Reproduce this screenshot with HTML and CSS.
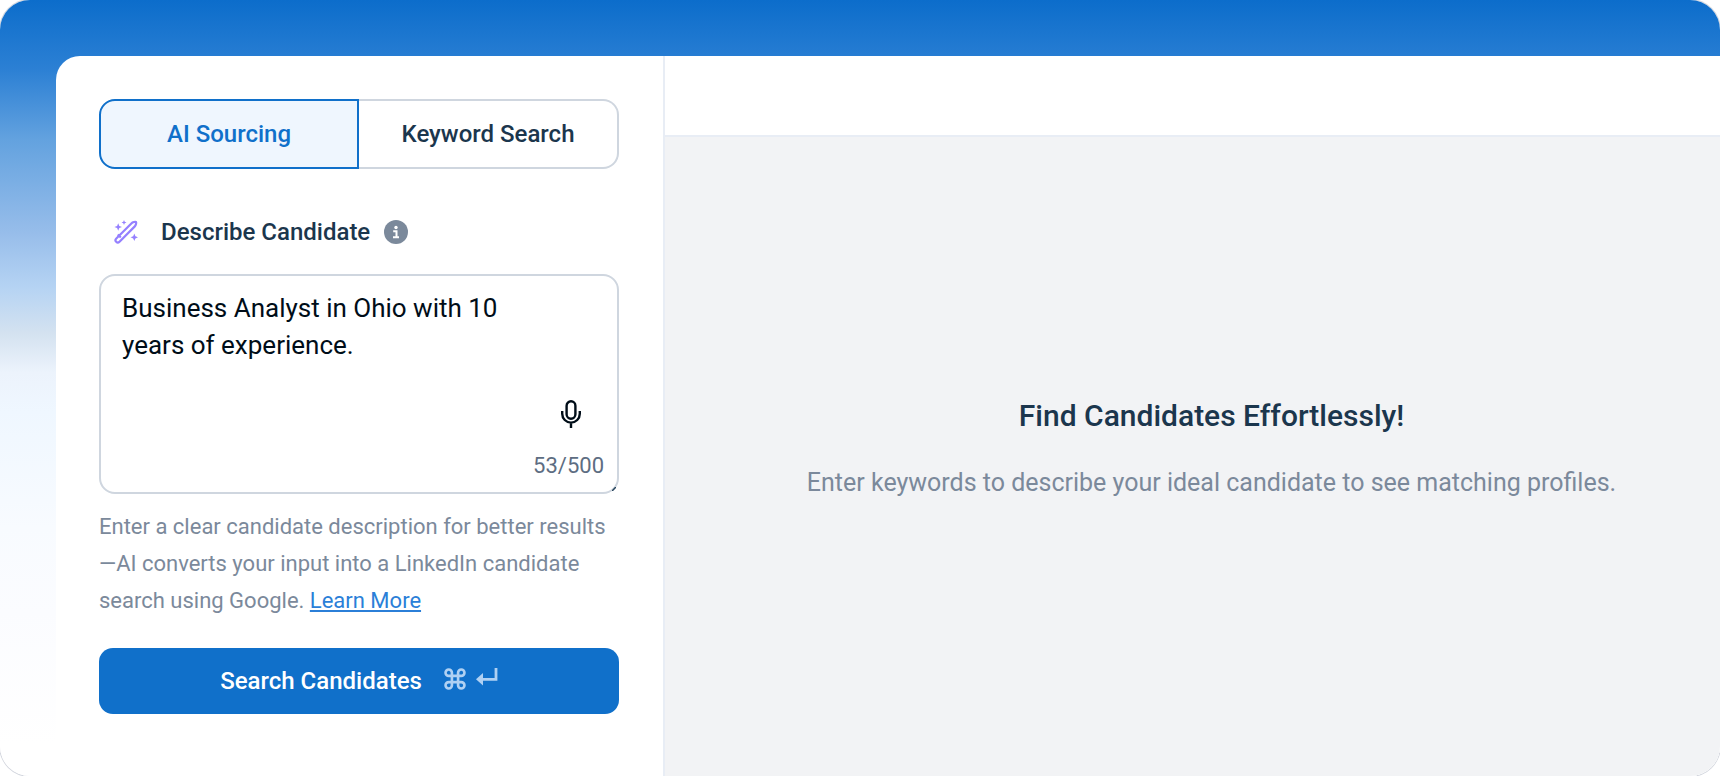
FILE: index.html
```html
<!DOCTYPE html>
<html lang="en">
<head>
<meta charset="utf-8">
<title>AI Sourcing</title>
<link rel="stylesheet" href="styles.css">
</head>
<body>
<div class="frame">
  <div class="app">
    <form class="sidebar">
      <div class="tabs" role="tablist">
        <button class="tab tab-active" type="button" role="tab" aria-selected="true">AI Sourcing</button>
        <button class="tab" type="button" role="tab" aria-selected="false">Keyword Search</button>
      </div>
      <div class="field-head">
        <svg class="wand" viewBox="0 0 24 24" aria-hidden="true">
          <path d="M2.200 21.800c-1-1-.9-2.300.1-3.300L17.600 3.200c1-1 3.600-1.700 4.400-1.200.5.8-.2 3.400-1.200 4.400L5.500 21.700c-1 1-2.300 1.100-3.300.1z" fill="none" stroke="currentColor" stroke-width="2.200"/>
          <path d="M3.800 14.500l3 3" fill="none" stroke="currentColor" stroke-width="2.200"/>
          <path d="M4.200 3.200l1.100 2.700L8 7 5.300 8.100l-1.100 2.700-1.100-2.700L.4 7l2.700-1.100zM10 0l.7 1.800 1.800.7-1.800.7L10 5l-.7-1.800-1.800-.7 1.800-.7zM20.300 13.500l1.100 2.700 2.600 1.100-2.600 1.100-1.100 2.700-1.100-2.700-2.700-1.100 2.700-1.100z" fill="currentColor"/>
        </svg>
        <label class="field-label" for="description">Describe Candidate</label>
        <svg class="info" viewBox="0 0 24 24" aria-hidden="true">
          <circle cx="12" cy="12" r="12" fill="#7b899b"/>
          <circle cx="12" cy="7.500" r="1.700" fill="#fff"/>
          <path d="M9.200 11.200h3.300v6M9 17.200h6" fill="none" stroke="#fff" stroke-width="2"/>
        </svg>
      </div>
      <div class="box">
        <textarea class="input" id="description" maxlength="500" spellcheck="false">Business Analyst in Ohio with 10 years of experience.</textarea>
        <button class="mic" type="button" aria-label="Dictate">
          <svg class="mic-icon" viewBox="0 0 20 28" fill="none" stroke="currentColor" stroke-width="2.400" aria-hidden="true">
            <rect x="5.600" y="1.300" width="8.800" height="17.400" rx="4.400"/>
            <path d="M1.200 11v2.800a8.800 8.800 0 0 0 17.600 0V11M10 22.600V28"/>
          </svg>
        </button>
        <span class="count">53/500</span>
        <svg class="grip" viewBox="0 0 4 4" aria-hidden="true"><path d="M0 4L4 0" stroke="#27445c" stroke-width="1.500"/></svg>
      </div>
      <p class="help">Enter a clear candidate description for better results<wbr>—AI converts your input into a LinkedIn candidate search using Google. <a class="link" href="#">Learn More</a></p>
      <button class="submit" type="submit">
        <span>Search Candidates</span>
        <span class="keys" aria-hidden="true">
          <svg class="key-cmd" viewBox="0 0 20 20" fill="none" stroke="currentColor" stroke-width="2.400"><path d="M7.200 7.200V4.300a2.900 2.900 0 1 0-2.900 2.900h11.400a2.900 2.900 0 1 0-2.900-2.900v11.400a2.900 2.900 0 1 0 2.900-2.900H4.300a2.900 2.900 0 1 0 2.900 2.900z"/></svg>
          <svg class="key-enter" viewBox="0 0 22 18"><path d="M20 0v11.300H6" fill="none" stroke="currentColor" stroke-width="2.800"/><path d="M0 11.300L7 5v12.600z" fill="currentColor"/></svg>
        </span>
      </button>
    </form>
    <main class="results">
      <header class="results-bar"></header>
      <section class="empty">
        <h1 class="empty-title">Find Candidates Effortlessly!</h1>
        <p class="empty-text">Enter keywords to describe your ideal candidate to see matching profiles.</p>
      </section>
    </main>
  </div>
</div>
</body>
</html>
```
FILE: styles.css
```css
* { box-sizing: border-box; }

body {
  margin: 0;
  background: #fff;
  font-family: Roboto, "Liberation Sans", sans-serif;
  color: #1b364d;
}

button, textarea { font: inherit; }

.frame {
  display: flex;
  min-height: 100vh;
  padding: 56px 0 0 56px;
  border-radius: 30px;
  overflow: hidden;
  background: linear-gradient(#0c6dcb 0%, #2c80d4 9%, #63a2df 18%, #97bdea 30%, #b5d3f3 37%, #d4e2f0 43%, #ecf3fc 48%, #eff7ff 53%, #f8fbff 68%, #fbfcff 79%, #fff 96%);
  box-shadow: 0 0 0 1px #d3d6de;
}

.app {
  flex: 1;
  display: flex;
  border-top-left-radius: 24px;
  overflow: hidden;
  background: #fff;
}

.sidebar {
  flex: 0 0 609px;
  padding: 43px 44px 40px 43px;
  border-right: 2px solid #e8edf5;
}

.tabs { display: flex; height: 70px; }

.tab {
  flex: 0 0 50%;
  border: 2px solid #cfd6df;
  border-left: 0;
  border-radius: 0 16px 16px 0;
  background: #fff;
  color: #1b364d;
  font-size: 24px;
  font-weight: 500;
}

.tab-active {
  border: 2px solid #1070ca;
  border-radius: 16px 0 0 16px;
  background: #eff6fe;
  color: #1070ca;
}

.field-head {
  display: flex;
  align-items: center;
  height: 28px;
  margin: 49px 0 28px 15px;
}

.wand { width: 24px; height: 24px; color: #9580ff; }
.field-label { margin: 0 14px 0 23px; font-size: 24px; font-weight: 500; }
.info { width: 24px; height: 24px; }

.box {
  position: relative;
  height: 220px;
  border: 2px solid #cfd6df;
  border-radius: 16px;
}

.input {
  display: block;
  width: 100%;
  height: 100%;
  padding: 14px 88px 14px 21px;
  border: 0;
  border-radius: 14px;
  outline: 0;
  resize: none;
  background: none;
  color: #000d18;
  font-size: 26px;
  line-height: 37px;
}

.mic {
  position: absolute;
  right: 36px;
  bottom: 64px;
  padding: 0;
  border: 0;
  background: none;
  color: #000d18;
}

.mic-icon { display: block; width: 20px; height: 28px; }

.count {
  position: absolute;
  right: 13px;
  bottom: 12px;
  color: #5d6d82;
  font-size: 22px;
  line-height: 28px;
}

.grip { position: absolute; right: 1px; bottom: 1px; width: 4px; height: 4px; }

.help {
  margin: 14px 0 29px;
  color: #7b899b;
  font-size: 22px;
  line-height: 37px;
}

.link { color: #2b7fd8; text-underline-offset: 2px; text-decoration-thickness: 2px; }

.submit {
  display: flex;
  justify-content: center;
  align-items: center;
  gap: 22px;
  width: 100%;
  height: 66px;
  padding: 0;
  border: 0;
  border-radius: 14px;
  background: #1070ca;
  color: #fff;
  font-size: 24px;
  font-weight: 500;
}

.keys { display: flex; gap: 10px; padding-bottom: 4px; color: #b0d1f3; }
.key-cmd { width: 22px; height: 22px; }
.key-enter { width: 22px; height: 18px; }

.results { flex: 1; display: flex; flex-direction: column; background: #f2f3f5; }
.results-bar { height: 81px; border-bottom: 2px solid #e8edf5; background: #fff; }

.empty {
  flex: 1;
  display: flex;
  flex-direction: column;
  align-items: center;
  justify-content: center;
  gap: 30px;
  padding: 0 0 14px 38px;
  text-align: center;
}

.empty-title { margin: 0; font-size: 30px; font-weight: 500; line-height: 36px; }
.empty-text { margin: 0; color: #7b899b; font-size: 25px; line-height: 37px; }
```
